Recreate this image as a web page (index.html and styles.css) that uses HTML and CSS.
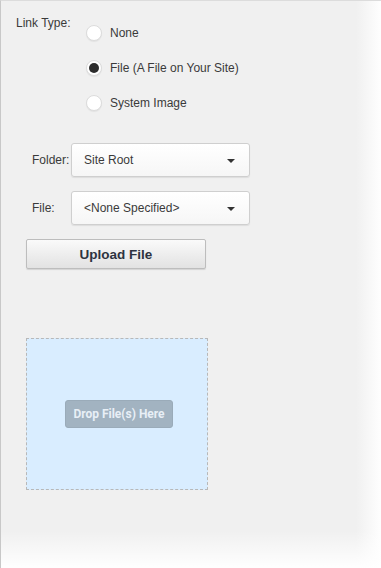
FILE: index.html
```html
<!DOCTYPE html>
<html lang="en">
<head>
    <meta charset="UTF-8">
    <meta name="viewport" content="width=device-width, initial-scale=1.0">
    <title>Link Settings</title>
    <link rel="stylesheet" href="styles.css">
</head>
<body>
    <div class="panel">
        <div class="link-row">
            <span class="link-label">Link Type:</span>
            <div class="radio-list">
                <label class="radio"><span class="dot"></span>None</label>
                <label class="radio"><span class="dot checked"></span>File (A File on Your Site)</label>
                <label class="radio"><span class="dot"></span>System Image</label>
            </div>
        </div>

        <div class="field-list">
            <div class="field">
                <span class="field-label">Folder:</span>
                <div class="select">Site Root<span class="caret"></span></div>
            </div>
            <div class="field">
                <span class="field-label">File:</span>
                <div class="select">&lt;None Specified&gt;<span class="caret"></span></div>
            </div>
        </div>

        <button class="upload">Upload File</button>

        <div class="dropzone">
            <span class="drop-btn">Drop File(s) Here</span>
        </div>
    </div>
</body>
</html>
```

FILE: styles.css
```css
*{
    margin: 0px;
    padding: 0px;
    box-sizing: border-box;
}
body{
    background: #fff;
    font-family: "Liberation Sans", Arial, sans-serif;
    font-size: 12px;
    color: #3a3a3a;
}
.panel{
    width: 381px;
    height: 568px;
    border-left: 1px solid #c8c8c8;
    border-top: 1px solid #dcdcdc;
    background:
        linear-gradient(to bottom, rgba(255,255,255,0) 530px, #fff 568px),
        linear-gradient(to right, #f0f0f0 355px, #fff 381px);
    padding-left: 15px;
}
.link-row{
    display: flex;
    padding-top: 15px;
}
.link-label{
    width: 70px;
    line-height: 14px;
}
.radio-list{
    display: flex;
    flex-direction: column;
    gap: 19px;
    margin-top: 9px;
}
.radio{
    display: flex;
    align-items: center;
    height: 16px;
    gap: 8px;
}
.dot{
    width: 16px;
    height: 16px;
    border-radius: 50%;
    background: #fff;
    border: 1px solid #dcdcdc;
    box-shadow: 0 1px 1px rgba(0,0,0,0.06);
    display: flex;
    align-items: center;
    justify-content: center;
}
.dot.checked::after{
    content: "";
    width: 10px;
    height: 10px;
    border-radius: 50%;
    background: #2b2b2b;
}
.field-list{
    display: flex;
    flex-direction: column;
    gap: 14px;
    margin-top: 32px;
}
.field{
    display: flex;
    align-items: center;
}
.field-label{
    width: 39px;
    margin-left: 16px;
}
.select{
    width: 179px;
    height: 34px;
    border: 1px solid #cfcfcf;
    border-radius: 3px;
    background: linear-gradient(#fff, #f6f6f6);
    box-shadow: 0 1px 1px rgba(0,0,0,0.08);
    display: flex;
    align-items: center;
    padding-left: 12px;
    position: relative;
}
.caret{
    position: absolute;
    right: 14px;
    top: 15px;
    border-left: 4px solid transparent;
    border-right: 4px solid transparent;
    border-top: 4px solid #333;
}
.upload{
    display: block;
    margin: 14px 0 0 10px;
    width: 180px;
    height: 30px;
    border: 1px solid #bdbdbd;
    border-radius: 2px;
    background: linear-gradient(#fafafa, #e2e2e2);
    box-shadow: 0 1px 1px rgba(0,0,0,0.12);
    font-family: "Liberation Sans", Arial, sans-serif;
    font-size: 13.5px;
    font-weight: bold;
    color: #2d3340;
}
.dropzone{
    margin: 69px 0 0 10px;
    width: 182px;
    height: 152px;
    border: 1px dashed #b8b8b8;
    background: #d9edff;
    display: flex;
    align-items: center;
    justify-content: center;
}
.drop-btn{
    width: 108px;
    height: 28px;
    margin-left: 4px;
    border-radius: 3px;
    background: #a2b3c1;
    border: 1px solid #9aabb9;
    color: #e8eff6;
    font-family: Roboto, "Liberation Sans", sans-serif;
    font-weight: bold;
    font-size: 12px;
    display: flex;
    align-items: center;
    justify-content: center;
}
```
